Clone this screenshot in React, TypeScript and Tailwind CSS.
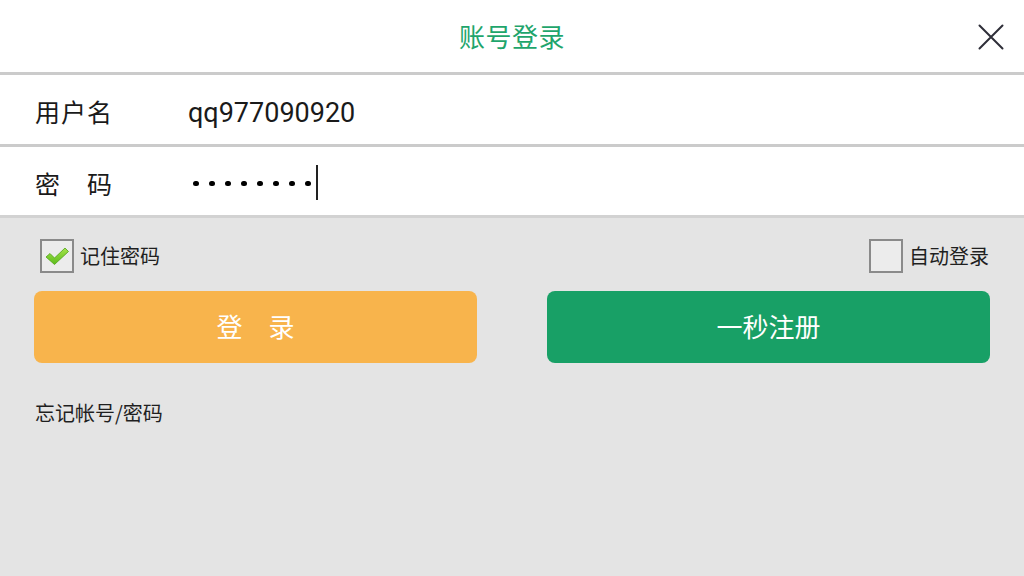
const cjk = { fontFamily: '"Noto Sans CJK SC", "Noto Sans", sans-serif' }
const latin = { fontFamily: 'Roboto, "Noto Sans CJK SC", sans-serif' }

function Checkbox({ checked }: { checked: boolean }) {
  return (
    <span className="w-[34px] h-[34px] border-2 border-[#8a8a8a] bg-[#ececec] flex items-center justify-center shrink-0">
      {checked && (
        <svg width="26" height="22" viewBox="0 0 26 22">
          <defs>
            <linearGradient id="ck" x1="0" y1="0" x2="0" y2="1">
              <stop offset="0" stopColor="#a6e34a" />
              <stop offset="1" stopColor="#5cbc1c" />
            </linearGradient>
          </defs>
          <path d="M2 12 L6 8.5 L10.5 13 L21 3 L24.5 6.5 L10.5 19.5 Z" fill="url(#ck)" stroke="#4fa318" strokeWidth="0.8" strokeLinejoin="round" />
        </svg>
      )}
    </span>
  )
}

export default function App() {
  return (
    <div className="w-[1024px] h-[576px] bg-[#e4e4e4] flex flex-col overflow-hidden" style={cjk}>
      <div className="h-[72px] bg-white relative flex items-center justify-center shrink-0">
        <span className="text-[26px] text-[#1fa56c] tracking-[0.5px] -mt-[2px]">账号登录</span>
        <svg className="absolute right-[20px] top-[24px]" width="26" height="26" viewBox="0 0 26 26">
          <path d="M1.5 1.5 L24.5 24.5 M24.5 1.5 L1.5 24.5" stroke="#2e2e38" strokeWidth="2" strokeLinecap="round" />
        </svg>
      </div>
      <div className="h-[3px] bg-[#cbcbcb] shrink-0" />
      <div className="h-[69px] bg-white flex items-center pt-[5px] shrink-0">
        <span className="w-[188px] pl-[35px] text-[25px] text-[#1a1a1a] tracking-[1px]">用户名</span>
        <span className="text-[27px] text-[#1a1a1a] mt-[3px]" style={latin}>qq977090920</span>
      </div>
      <div className="h-[3px] bg-[#cbcbcb] shrink-0" />
      <div className="h-[68px] bg-white flex items-center pt-[5px] shrink-0">
        <span className="w-[188px] pl-[35px] text-[25px] text-[#1a1a1a] tracking-[1px]">密　码</span>
        <div className="flex items-center pl-[5px] gap-[10.5px]">
          {Array.from({ length: 8 }).map((_, i) => (
            <span key={i} className="w-[5.5px] h-[5.5px] rounded-full bg-black" />
          ))}
          <span className="w-[1.5px] h-[35px] bg-[#222] -ml-[5px] -mt-[3px]" />
        </div>
      </div>
      <div className="h-[3px] bg-[#d2d2d2] shrink-0" />
      <div className="flex flex-col px-[34px]">
        <div className="flex items-center justify-between pt-[21px] pl-[6px] pr-[1px]">
          <label className="flex items-center gap-[6px]">
            <Checkbox checked />
            <span className="text-[20px] text-[#1f1f1f]">记住密码</span>
          </label>
          <label className="flex items-center gap-[6px]">
            <Checkbox checked={false} />
            <span className="text-[20px] text-[#1f1f1f]">自动登录</span>
          </label>
        </div>
        <div className="flex justify-between mt-[18px]">
          <button className="w-[443px] h-[72px] rounded-[8px] bg-[#f8b44c] text-white text-[26px] flex items-center justify-center pb-[4px]">
            登　录
          </button>
          <button className="w-[443px] h-[72px] rounded-[8px] bg-[#18a066] text-white text-[26px] flex items-center justify-center pb-[4px]">
            一秒注册
          </button>
        </div>
        <div className="mt-[35px] pl-[1px] text-[20px] text-[#1f1f1f]">忘记帐号/密码</div>
      </div>
    </div>
  )
}
